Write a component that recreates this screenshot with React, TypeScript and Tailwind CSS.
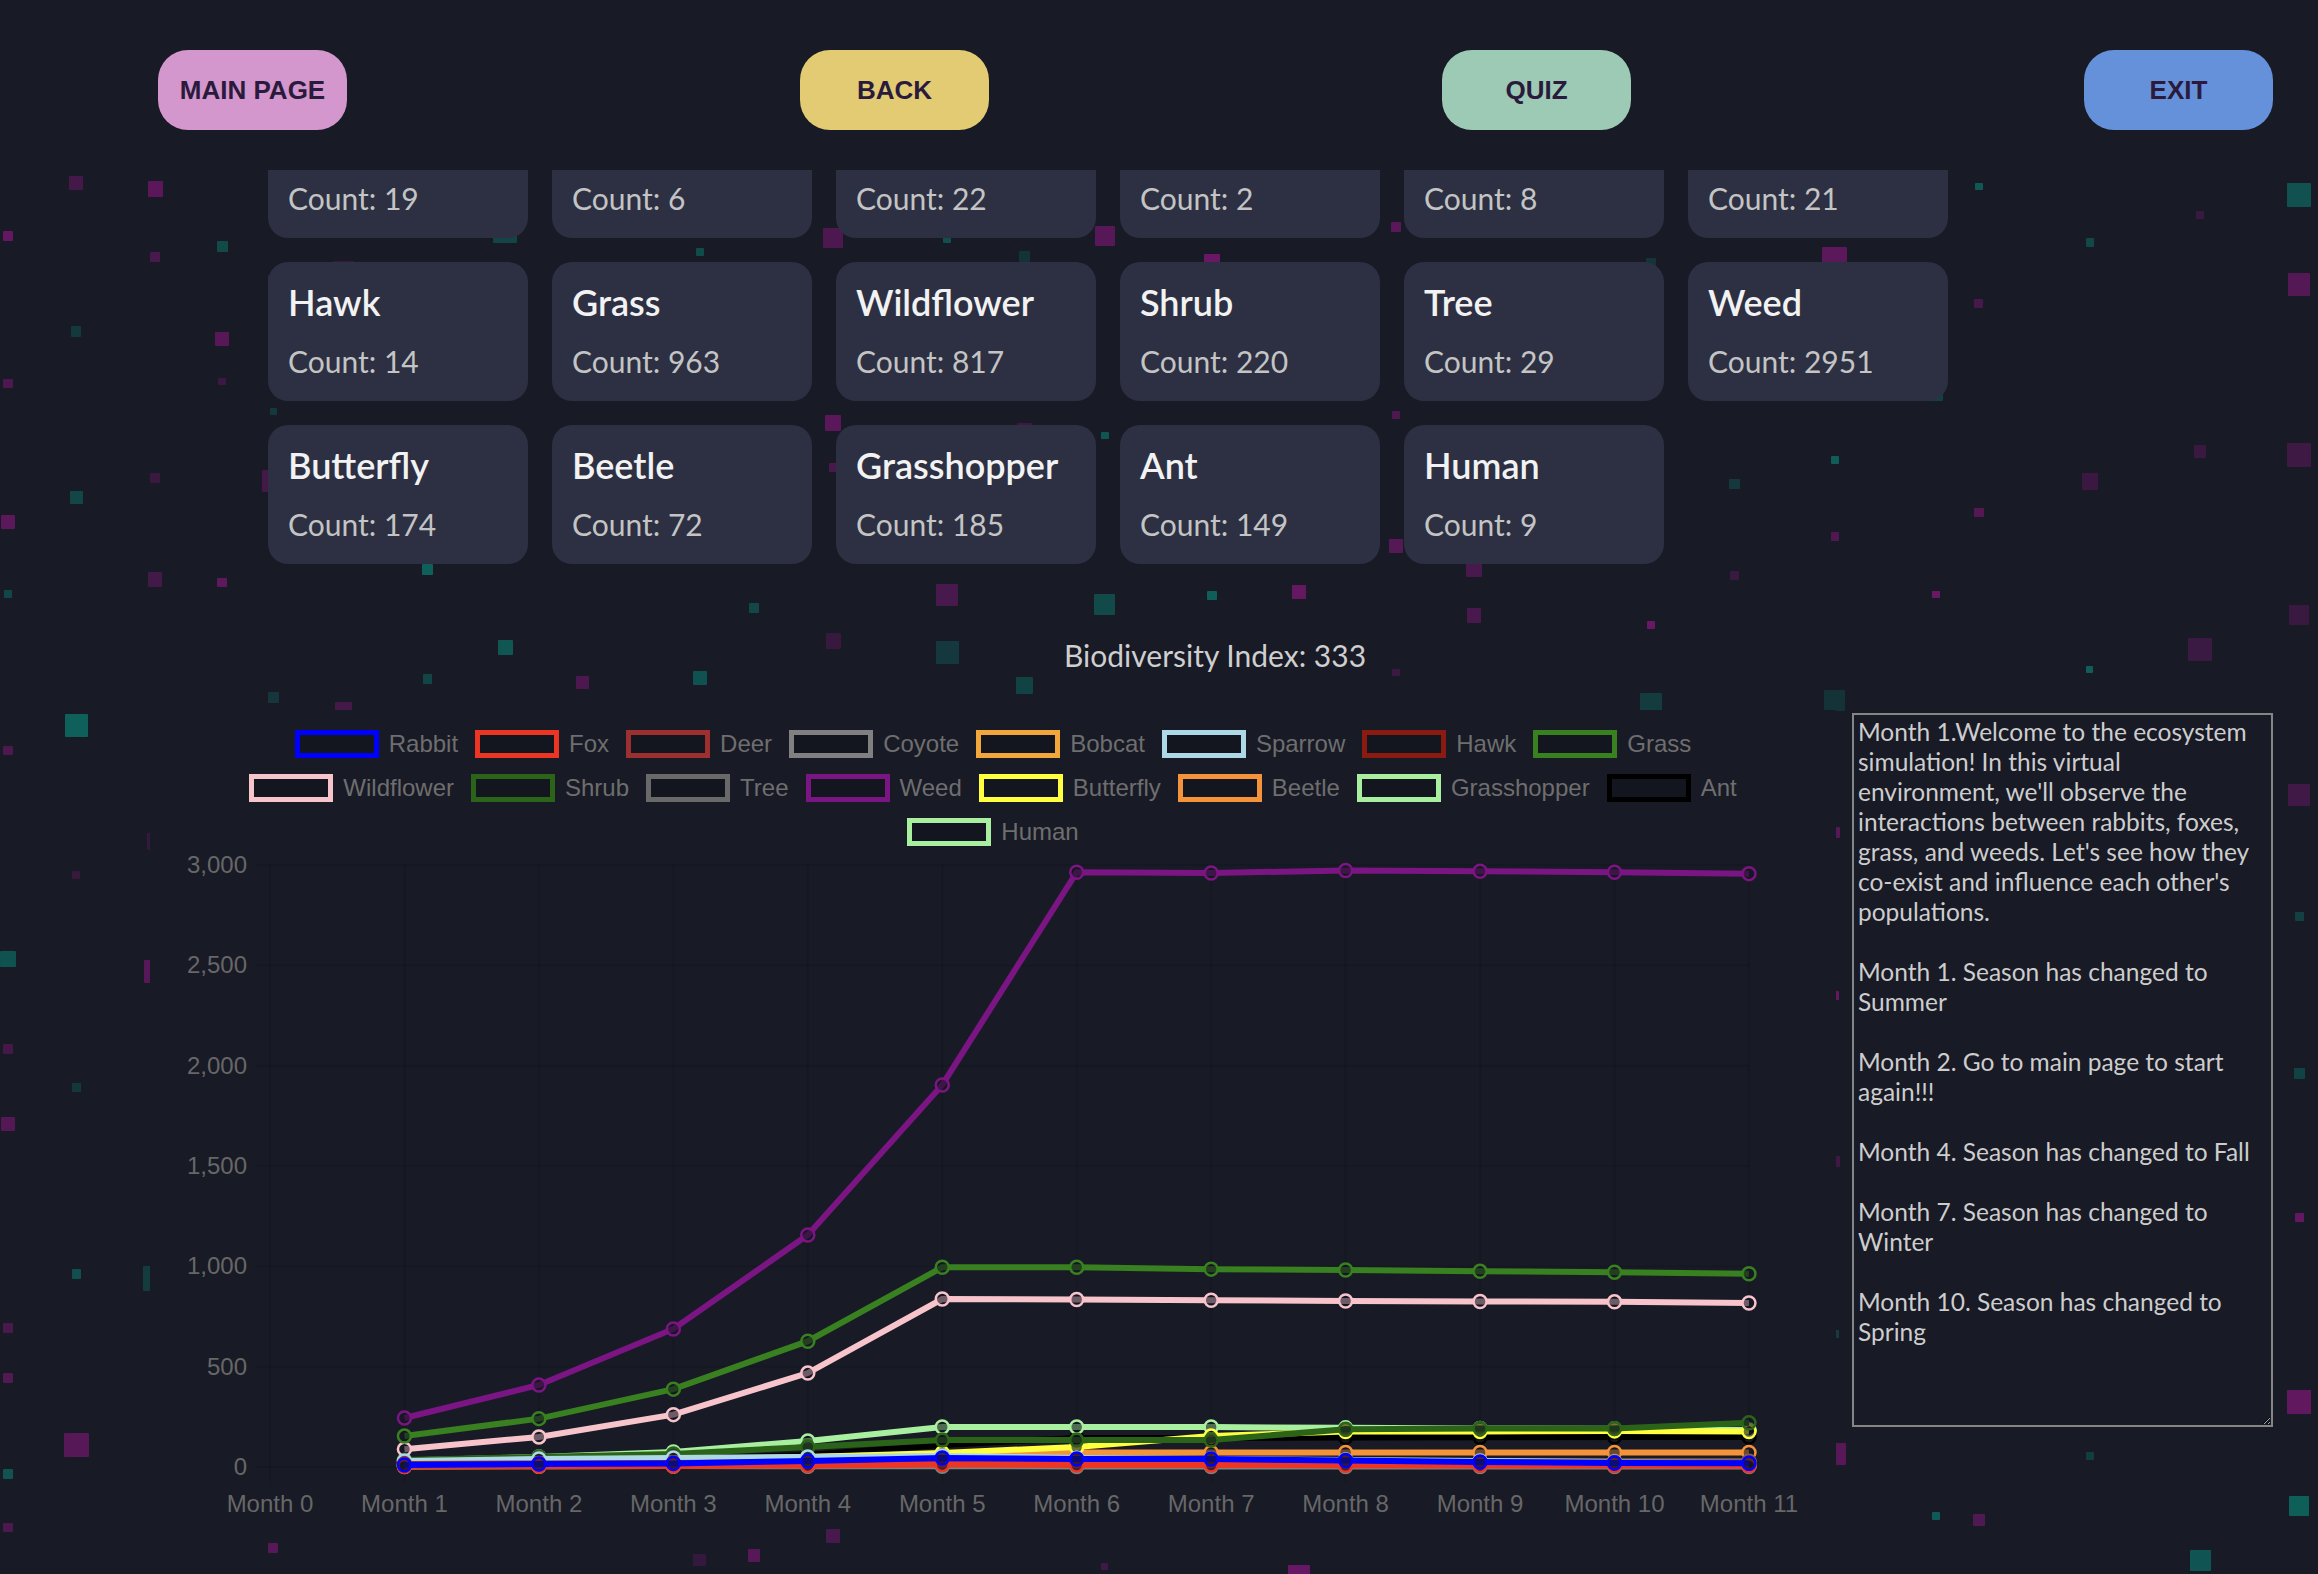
import React from 'react'

type Species = { name: string; color: string; box: string; count: number; data: number[] }

const species: Species[] = [
  { name: 'Rabbit', color: '#0000ff', box: 'border-[#0000ff]', count: 19, data: [10, 15, 18, 30, 45, 40, 40, 32, 25, 20, 19] },
  { name: 'Fox', color: '#ec3523', box: 'border-[#ec3523]', count: 6, data: [3, 4, 5, 8, 12, 10, 10, 9, 8, 7, 6] },
  { name: 'Deer', color: '#9c3030', box: 'border-[#9c3030]', count: 22, data: [15, 18, 20, 25, 25, 24, 24, 23, 23, 22, 22] },
  { name: 'Coyote', color: '#808080', box: 'border-[#808080]', count: 2, data: [5, 5, 5, 4, 4, 3, 3, 3, 2, 2, 2] },
  { name: 'Bobcat', color: '#f2a73c', box: 'border-[#f2a73c]', count: 8, data: [5, 6, 7, 8, 10, 9, 9, 9, 8, 8, 8] },
  { name: 'Sparrow', color: '#add8e6', box: 'border-[#add8e6]', count: 21, data: [30, 40, 45, 50, 55, 45, 40, 35, 30, 25, 21] },
  { name: 'Hawk', color: '#8b1a10', box: 'border-[#8b1a10]', count: 14, data: [8, 9, 10, 12, 14, 14, 14, 14, 14, 14, 14] },
  { name: 'Grass', color: '#388020', box: 'border-[#388020]', count: 963, data: [154, 241, 388, 627, 995, 995, 986, 982, 975, 971, 963] },
  { name: 'Wildflower', color: '#f8c4cc', box: 'border-[#f8c4cc]', count: 817, data: [89, 150, 261, 468, 837, 835, 831, 827, 825, 823, 817] },
  { name: 'Shrub', color: '#2b6419', box: 'border-[#2b6419]', count: 220, data: [35, 50, 65, 100, 134, 134, 134, 188, 192, 192, 220] },
  { name: 'Tree', color: '#696969', box: 'border-[#696969]', count: 29, data: [20, 22, 25, 27, 29, 29, 29, 29, 29, 29, 29] },
  { name: 'Weed', color: '#7b1583', box: 'border-[#7b1583]', count: 2951, data: [244, 409, 688, 1156, 1904, 2964, 2960, 2973, 2969, 2964, 2957] },
  { name: 'Butterfly', color: '#ffff40', box: 'border-[#ffff40]', count: 174, data: [10, 20, 30, 50, 70, 100, 155, 177, 177, 180, 177] },
  { name: 'Beetle', color: '#f5933a', box: 'border-[#f5933a]', count: 72, data: [15, 25, 35, 50, 65, 72, 72, 72, 72, 72, 72] },
  { name: 'Grasshopper', color: '#a8f0a0', box: 'border-[#a8f0a0]', count: 185, data: [32, 50, 75, 130, 199, 199, 199, 195, 192, 190, 185] },
  { name: 'Ant', color: '#000000', box: 'border-[#000000]', count: 149, data: [20, 30, 40, 60, 110, 145, 145, 147, 148, 149, 149] },
  { name: 'Human', color: '#a8f0a0', box: 'border-[#a8f0a0]', count: 9, data: [3, 4, 5, 6, 8, 9, 9, 9, 9, 9, 9] },
]

const LOG = `Month 1.Welcome to the ecosystem
simulation! In this virtual
environment, we'll observe the
interactions between rabbits, foxes,
grass, and weeds. Let's see how they
co-exist and influence each other's
populations.

Month 1. Season has changed to
Summer

Month 2. Go to main page to start
again!!!

Month 4. Season has changed to Fall

Month 7. Season has changed to
Winter

Month 10. Season has changed to
Spring`

function mulberry32(a: number) {
  return () => {
    a |= 0
    a = (a + 0x6d2b79f5) | 0
    let t = Math.imul(a ^ (a >>> 15), 1 | a)
    t = (t + Math.imul(t ^ (t >>> 7), 61 | t)) ^ t
    return ((t ^ (t >>> 14)) >>> 0) / 4294967296
  }
}

type Drop = { x: number; y: number; s: number; teal: boolean; o: number }

// falling squares in the background, fixed seed so the picture is stable
const drops: Drop[] = (() => {
  const rnd = mulberry32(11)
  const out: Drop[] = []
  let x = 8
  while (x < 2318) {
    let y = 170 + rnd() * 120
    while (y < 1574) {
      const r = rnd()
      const s = r < 0.55 ? 7 + rnd() * 4 : r < 0.85 ? 12 + rnd() * 5 : 19 + rnd() * 6
      out.push({ x, y, s, teal: rnd() < 0.42, o: 0.35 + rnd() * 0.65 })
      y += 45 + rnd() * 190
    }
    x += 40 + rnd() * 80
  }
  return out
})()

const Rain = () => (
  <div className="absolute inset-0">
    {drops.map((d, i) => (
      <div
        key={i}
        className={`absolute rounded-[1px] ${d.teal ? 'bg-[#0f645e]' : 'bg-[#6c1868]'}`}
        style={{ left: d.x - d.s / 2, top: d.y, width: d.s, height: d.s, opacity: d.o }}
      />
    ))}
  </div>
)

const NavButton = ({ label, color }: { label: string; color: string }) => (
  <button
    type="button"
    className={`w-[189px] h-[80px] rounded-[30px] ${color} text-[#2a1a3c] text-[26px] font-bold font-['Liberation_Sans',Arial,sans-serif]`}
  >
    {label}
  </button>
)

const Card = ({ s }: { s: Species }) => (
  <div className="h-[139px] rounded-[20px] bg-[#2c3042] px-[20px] pt-[18px]">
    <div className="text-[36px] leading-[44px] font-semibold text-[#f2f2f2]">{s.name}</div>
    <div className="mt-[19px] text-[30px] leading-[36px] text-[#c4c4c4]">Count: {s.count}</div>
  </div>
)

const LegendRow = ({ items }: { items: Species[] }) => (
  <div className="flex h-[28px] items-center justify-center gap-[17px]">
    {items.map((s) => (
      <div key={s.name} className="flex items-center gap-[10px]">
        <div className={`w-[84px] h-[28px] border-[5px] ${s.box} bg-[#14161f]`} />
        <span className="text-[24px] leading-none text-[#6e6e6e]">{s.name}</span>
      </div>
    ))}
  </div>
)

const xAt = (i: number) => 120 + i * 134.45
const yAt = (v: number) => 621 - (v * 602) / 3000

const Plot = () => {
  const ticks = [0, 500, 1000, 1500, 2000, 2500, 3000]
  const months = Array.from({ length: 12 }, (_, i) => i)
  return (
    <svg width={1686} height={682} className="block font-['Liberation_Sans',Arial,sans-serif]">
      {months.map((i) => (
        <line key={i} x1={xAt(i)} x2={xAt(i)} y1={yAt(3000)} y2={yAt(0) + 15} stroke="rgba(0,0,0,0.1)" strokeWidth={2} />
      ))}
      {ticks.map((t) => (
        <line key={t} x1={xAt(0) - 15} x2={xAt(11)} y1={yAt(t)} y2={yAt(t)} stroke="rgba(0,0,0,0.1)" strokeWidth={2} />
      ))}
      {ticks.map((t) => (
        <text key={t} x={97} y={yAt(t) + 8} textAnchor="end" className="fill-[#676767] text-[24px]">
          {t.toLocaleString('en-US')}
        </text>
      ))}
      {months.map((i) => (
        <text key={i} x={xAt(i)} y={666} textAnchor="middle" className="fill-[#676767] text-[24px]">
          Month {i}
        </text>
      ))}
      {[...species].reverse().map((s) => {
        const pts = s.data.map((v, k) => [xAt(k + 1), yAt(v)] as const)
        return (
          <g key={s.name}>
            <polyline points={pts.map((p) => p.join(',')).join(' ')} fill="none" stroke={s.color} strokeWidth={6} />
            {pts.map(([x, y], k) => (
              <circle key={k} cx={x} cy={y} r={6.5} fill="rgba(20,22,31,0.6)" stroke={s.color} strokeWidth={2.5} />
            ))}
          </g>
        )
      })}
    </svg>
  )
}

const App = () => {
  return (
    <div className="relative h-[1574px] overflow-hidden bg-[#181a26] font-['Lato','Noto_Sans',sans-serif]">
      <Rain />
      <div className="relative">
        <div className="flex h-[170px] gap-[453px] bg-[#181a26] pl-[158px] pt-[50px]">
          <NavButton label="MAIN PAGE" color="bg-[#d396cd]" />
          <NavButton label="BACK" color="bg-[#e2cb73]" />
          <NavButton label="QUIZ" color="bg-[#9dcab5]" />
          <NavButton label="EXIT" color="bg-[#6591da]" />
        </div>

        <div className="ml-[268px] h-[410px] w-[1680px] overflow-hidden">
          <div className="-mt-[71px] grid grid-cols-6 gap-[24px]">
            {species.map((s) => (
              <Card key={s.name} s={s} />
            ))}
          </div>
        </div>

        <div className="ml-[150px] mt-[57px] w-[2130px] text-center text-[30px] leading-[36px] text-[#cfcfcf]">
          Biodiversity Index: 333
        </div>

        <div className="ml-[150px] mt-[37px] flex items-start">
          <div className="flex h-[818px] w-[1686px] flex-col bg-[#181a26] font-['Liberation_Sans',Arial,sans-serif]">
            <div className="flex flex-col gap-[16px] pt-[20px]">
              <LegendRow items={species.slice(0, 8)} />
              <LegendRow items={species.slice(8, 16)} />
              <LegendRow items={species.slice(16)} />
            </div>
            <Plot />
          </div>
          <textarea
            readOnly
            wrap="off"
            defaultValue={LOG}
            className="ml-[16px] mt-[3px] h-[714px] w-[421px] overflow-hidden border-2 border-[#858585] bg-[#181a26] p-[2px] pl-[4px] text-[24.5px] leading-[30px] text-[#cdcdcd] outline-none"
          />
        </div>
      </div>
    </div>
  )
}

export default App
